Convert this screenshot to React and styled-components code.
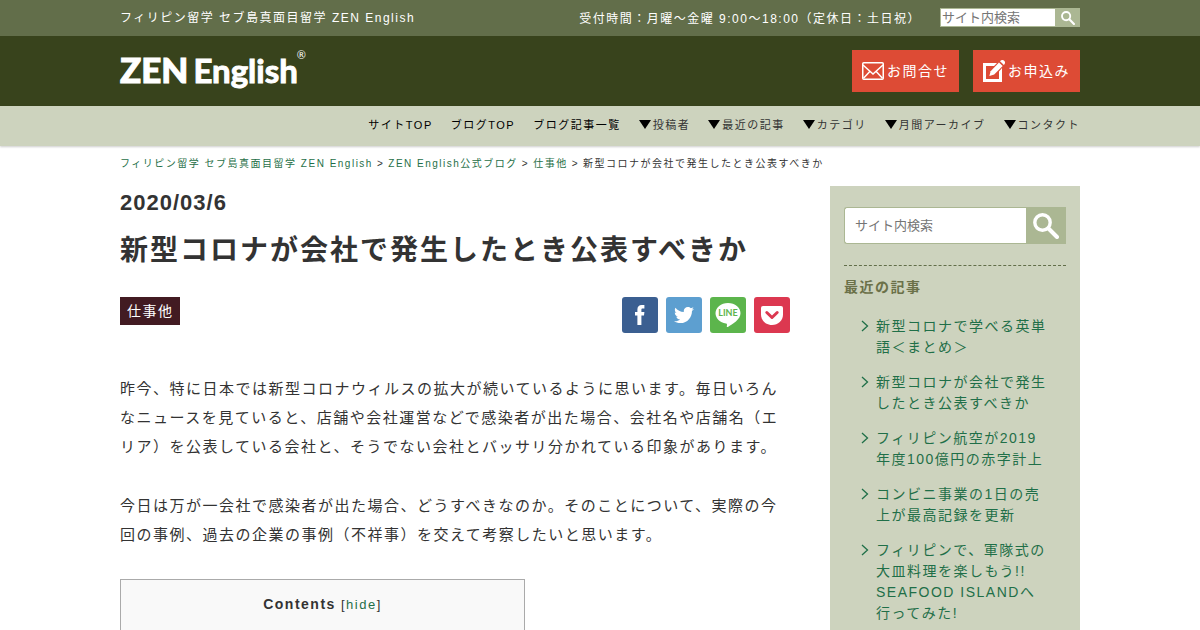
import React from "react";
import styled, { createGlobalStyle } from "styled-components";
import { FaTwitter } from "react-icons/fa";

const GlobalStyle = createGlobalStyle`
  *, *::before, *::after { box-sizing: border-box; }
  body {
    margin: 0;
    background: #fff;
    color: #333;
    font-family: "Liberation Sans", "Noto Sans CJK JP", sans-serif;
    font-size: 15px;
    letter-spacing: 0.1em;
  }
  a { color: #1f6f48; text-decoration: none; }
  h1, h2, p, ul, ol { margin: 0; padding: 0; }
  ul, ol { list-style: none; }
  input, button { font-family: inherit; border-radius: 0; }
`;

const Container = styled.div`
  max-width: 960px;
  margin: 0 auto;
`;

const TopBar = styled.div`
  background: #626e4a;
  color: #fff;
  font-size: 12px;
  line-height: 36px;
`;

const TopRow = styled(Container)`
  display: flex;
  justify-content: space-between;
  height: 36px;
`;

const TopTools = styled.div`
  display: flex;
  gap: 19px;
  padding-top: 1px;
`;

const MiniSearch = styled.form`
  display: flex;
  width: 140px;
  height: 19px;
  margin-top: 7px;

  input {
    flex: 1;
    min-width: 0;
    padding: 0 1px;
    border: 1px solid #abb793;
    border-right: 0;
    background: #fff;
    font-size: 13px;
    outline: 0;
  }
`;

const SearchButton = styled.button`
  display: flex;
  align-items: center;
  justify-content: center;
  width: ${(p) => p.$width}px;
  padding: 0;
  border: 0;
  background: #abb793;
  color: #fff;
`;

const Masthead = styled.header`
  background: #38431c;
`;

const MastheadRow = styled(Container)`
  display: flex;
  justify-content: space-between;
  align-items: center;
  height: 70px;
`;

const Logo = styled.a`
  display: flex;
  align-items: baseline;
  gap: 5px;
  padding-bottom: 4px;
  color: #fff;
  font-family: Lato, sans-serif;
  font-weight: 700;
  font-size: 33px;
  line-height: 40px;
  letter-spacing: 0;
  -webkit-text-stroke: 1px #fff;

  strong { font-size: 35px; }
  sup {
    align-self: flex-start;
    margin-left: -6px;
    font-size: 11px;
    font-weight: 400;
    line-height: 12px;
    -webkit-text-stroke: 0;
  }
`;

const Actions = styled.div`
  display: flex;
  gap: 14px;
`;

const ActionLink = styled.a`
  display: flex;
  align-items: center;
  gap: 3px;
  width: 107px;
  height: 42px;
  padding-left: 10px;
  background: #dd4b35;
  color: #fff;
  font-size: 14px;

  span { padding-bottom: 2px; }
`;

const NavBar = styled.nav`
  background: #cdd3be;
  box-shadow: 0 1px 2px rgba(0, 0, 0, 0.2);
`;

const NavList = styled.ul`
  display: flex;
  justify-content: flex-end;
  gap: 18px;
  max-width: 960px;
  margin: 0 auto;
  padding-bottom: 2px;
  font-size: 11px;
  line-height: 38px;
`;

const NavLink = styled.a`
  display: flex;
  color: ${(p) => (p.$menu ? "#333" : "#000")};

  &::before {
    content: "";
    display: ${(p) => (p.$menu ? "block" : "none")};
    margin: 14px 2px 0 0;
    height: 0;
    border: 6px solid transparent;
    border-top: 9px solid #000;
    border-bottom: 0;
  }
`;

const Breadcrumb = styled.ol`
  display: flex;
  font-size: 10px;
  line-height: 14px;
  padding: 11px 0 15px;

  li + li::before { content: ">"; margin: 0 4px; }
`;

const Columns = styled.div`
  display: flex;
  align-items: flex-start;
  gap: 40px;
`;

const Article = styled.article`
  flex: 1;
  min-width: 0;

  p {
    margin-bottom: 30px;
    line-height: 29px;
  }
`;

const PostDate = styled.time`
  display: block;
  font-size: 22px;
  font-weight: 700;
  line-height: 34px;
  letter-spacing: 1px;
`;

const Title = styled.h1`
  margin: 10px 0 25px;
  font-size: 28px;
  line-height: 42px;
  letter-spacing: 2px;
`;

const Meta = styled.div`
  display: flex;
  justify-content: space-between;
  align-items: flex-start;
  margin-bottom: 41px;
`;

const Tag = styled.a`
  padding: 0 6px 0 7px;
  background: #421b22;
  color: #fff;
  font-size: 14px;
  line-height: 28px;
`;

const Shares = styled.ul`
  display: flex;
  gap: 8px;
`;

const ShareLink = styled.a`
  display: flex;
  align-items: center;
  justify-content: center;
  width: 36px;
  height: 36px;
  border-radius: 3px;
  background: ${(p) => p.$color};
  color: #fff;
`;

const Contents = styled.div`
  width: 405px;
  max-width: 100%;
  padding: 10px 10px 40px;
  border: 1px solid #aaa;
  background: #f9f9f9;
  text-align: center;
  font-size: 13px;
  line-height: 29px;

  strong { font-size: 14px; }
`;

const Sidebar = styled.aside`
  width: 250px;
  padding: 21px 14px 30px;
  background: #cdd3be;
`;

const SideSearch = styled.form`
  display: flex;
  height: 37px;
  margin-bottom: 21px;

  input {
    flex: 1;
    min-width: 0;
    padding: 0 10px;
    border: 1px solid #abb793;
    border-right: 0;
    border-radius: 3px 0 0 3px;
    background: #fff;
    font-size: 13px;
    outline: 0;
  }
`;

const SideHeading = styled.h2`
  border-top: 1px dashed #626e4a;
  padding: 10px 0 18px;
  color: #6b7149;
  font-size: 14px;
  line-height: 22px;
`;

const PostList = styled.ul`
  padding: 0 18px 0 17px;
  font-size: 14px;
  line-height: 21px;

  li + li { margin-top: 14px; }
`;

const PostLink = styled.a`
  display: flex;
  gap: 7px;

  svg { flex: none; margin-top: 4px; }
`;

const SearchIcon = ({ size }) => (
  <svg width={size} height={size} viewBox="0 0 26 26" fill="none" stroke="currentColor" aria-hidden="true">
    <circle cx="9.5" cy="9.5" r="7.7" strokeWidth="3.4" />
    <path d="M15.5 15.5L24 24" strokeWidth="4" strokeLinecap="round" />
  </svg>
);

const MailIcon = () => (
  <svg width="22" height="18" viewBox="0 0 22 18" fill="none" stroke="#fff" strokeWidth="1.5" aria-hidden="true">
    <rect x="0.75" y="0.75" width="20.5" height="16.5" rx="1" />
    <path d="M1 3L11 12L21 3M1.5 16.3L7.8 9.4M20.5 16.3L14.2 9.4" />
  </svg>
);

const WriteIcon = () => (
  <svg width="22" height="22" viewBox="0 0 22 22" aria-hidden="true">
    <path d="M0 3H14L11 6H3V19H16V11.5L19 8V22H0Z" fill="#fff" />
    <path d="M6.4 16L7.6 11.2L16 2.4L19.7 6L11.2 14.6Z" fill="#fff" />
    <path d="M17 1.2Q19.3 -1 21.2 .8Q23 2.7 20.9 5Z" fill="#fff" />
  </svg>
);

const FacebookIcon = () => (
  <svg width="10" height="20" viewBox="0 0 10 20" aria-hidden="true">
    <path d="M2.4 20V10.6H0V7H2.4V4.6C2.4 1.6 4 0 6.7 0H9.4V3.6H7.6C6.7 3.6 6.4 4 6.4 4.9V7H9.4L9 10.6H6.4V20Z" fill="#fff" />
  </svg>
);

const PocketIcon = () => (
  <svg width="22" height="19" viewBox="0 0 22 19" aria-hidden="true">
    <path d="M2 0H20Q22 0 22 2V8.5C22 14.5 17 19 11 19S0 14.5 0 8.5V2Q0 0 2 0Z" fill="#fff" />
    <path d="M5.8 6.5L11 11.5L16.2 6.5" fill="none" stroke="#dc3850" strokeWidth="3" strokeLinecap="round" strokeLinejoin="round" />
  </svg>
);

const LineIcon = () => (
  <svg width="26" height="26" viewBox="0 0 26 26" aria-hidden="true">
    <path d="M13 1C6 1 .5 5.6 .5 11.3C.5 16.4 5 20.6 11 21.4C12.4 21.7 12 22.7 11.8 24.4C11.8 25.1 12.2 25.3 12.9 24.9C17.5 22.2 25.5 17.6 25.5 11.3C25.5 5.6 20 1 13 1Z" fill="#fff" />
    <text x="13" y="14" textAnchor="middle" fill="#5cb54c" fontFamily="Lato, sans-serif" fontSize="9" fontWeight="700" letterSpacing="0">LINE</text>
  </svg>
);

const Chevron = () => (
  <svg width="8" height="12" viewBox="0 0 8 12" fill="none" stroke="currentColor" strokeWidth="1.3" aria-hidden="true">
    <path d="M1 1L6.5 6L1 11" />
  </svg>
);

const NAV = [
  ["サイトTOP", false],
  ["ブログTOP", false],
  ["ブログ記事一覧", false],
  ["投稿者", true],
  ["最近の記事", true],
  ["カテゴリ", true],
  ["月間アーカイブ", true],
  ["コンタクト", true],
];

const SHARES = [
  ["Facebook", "#3b5f91", <FacebookIcon />],
  ["Twitter", "#5d9fd0", <FaTwitter size={20} />],
  ["LINE", "#5cb54c", <LineIcon />],
  ["Pocket", "#dc3850", <PocketIcon />],
];

const POSTS = [
  "新型コロナで学べる英単語＜まとめ＞",
  "新型コロナが会社で発生したとき公表すべきか",
  "フィリピン航空が2019年度100億円の赤字計上",
  "コンビニ事業の1日の売上が最高記録を更新",
  "フィリピンで、軍隊式の大皿料理を楽しもう!! SEAFOOD ISLANDへ行ってみた!",
];

export default function App() {
  return (
    <>
      <GlobalStyle />
      <TopBar>
        <TopRow>
          <span>フィリピン留学 セブ島真面目留学 ZEN English</span>
          <TopTools>
            <span>受付時間：月曜～金曜 9:00～18:00（定休日：土日祝）</span>
            <MiniSearch>
              <input type="text" placeholder="サイト内検索" aria-label="サイト内検索" />
              <SearchButton type="button" $width={25} aria-label="検索">
                <SearchIcon size={14} />
              </SearchButton>
            </MiniSearch>
          </TopTools>
        </TopRow>
      </TopBar>
      <Masthead>
        <MastheadRow>
          <Logo href="#">
            <strong>ZEN</strong>
            <span>English</span>
            <sup>®</sup>
          </Logo>
          <Actions>
            <ActionLink href="#"><MailIcon /><span>お問合せ</span></ActionLink>
            <ActionLink href="#"><WriteIcon /><span>お申込み</span></ActionLink>
          </Actions>
        </MastheadRow>
      </Masthead>
      <NavBar>
        <NavList>
          {NAV.map(([label, menu]) => (
            <li key={label}><NavLink href="#" $menu={menu}>{label}</NavLink></li>
          ))}
        </NavList>
      </NavBar>
      <Container>
        <Breadcrumb>
          <li><a href="#">フィリピン留学 セブ島真面目留学 ZEN English</a></li>
          <li><a href="#">ZEN English公式ブログ</a></li>
          <li><a href="#">仕事他</a></li>
          <li>新型コロナが会社で発生したとき公表すべきか</li>
        </Breadcrumb>
        <Columns>
          <Article>
            <PostDate dateTime="2020-03-06">2020/03/6</PostDate>
            <Title>新型コロナが会社で発生したとき公表すべきか</Title>
            <Meta>
              <Tag href="#">仕事他</Tag>
              <Shares>
                {SHARES.map(([name, color, icon]) => (
                  <li key={name}><ShareLink href="#" $color={color} aria-label={name}>{icon}</ShareLink></li>
                ))}
              </Shares>
            </Meta>
            <p>昨今、特に日本では新型コロナウィルスの拡大が続いているように思います。毎日いろんなニュースを見ていると、店舗や会社運営などで感染者が出た場合、会社名や店舗名（エリア）を公表している会社と、そうでない会社とバッサリ分かれている印象があります。</p>
            <p>今日は万が一会社で感染者が出た場合、どうすべきなのか。そのことについて、実際の今回の事例、過去の企業の事例（不祥事）を交えて考察したいと思います。</p>
            <Contents>
              <strong>Contents</strong> [<a href="#">hide</a>]
            </Contents>
          </Article>
          <Sidebar>
            <SideSearch>
              <input type="text" placeholder="サイト内検索" aria-label="サイト内検索" />
              <SearchButton type="button" $width={40} aria-label="検索">
                <SearchIcon size={26} />
              </SearchButton>
            </SideSearch>
            <SideHeading>最近の記事</SideHeading>
            <PostList>
              {POSTS.map((title) => (
                <li key={title}><PostLink href="#"><Chevron /><span>{title}</span></PostLink></li>
              ))}
            </PostList>
          </Sidebar>
        </Columns>
      </Container>
    </>
  );
}
